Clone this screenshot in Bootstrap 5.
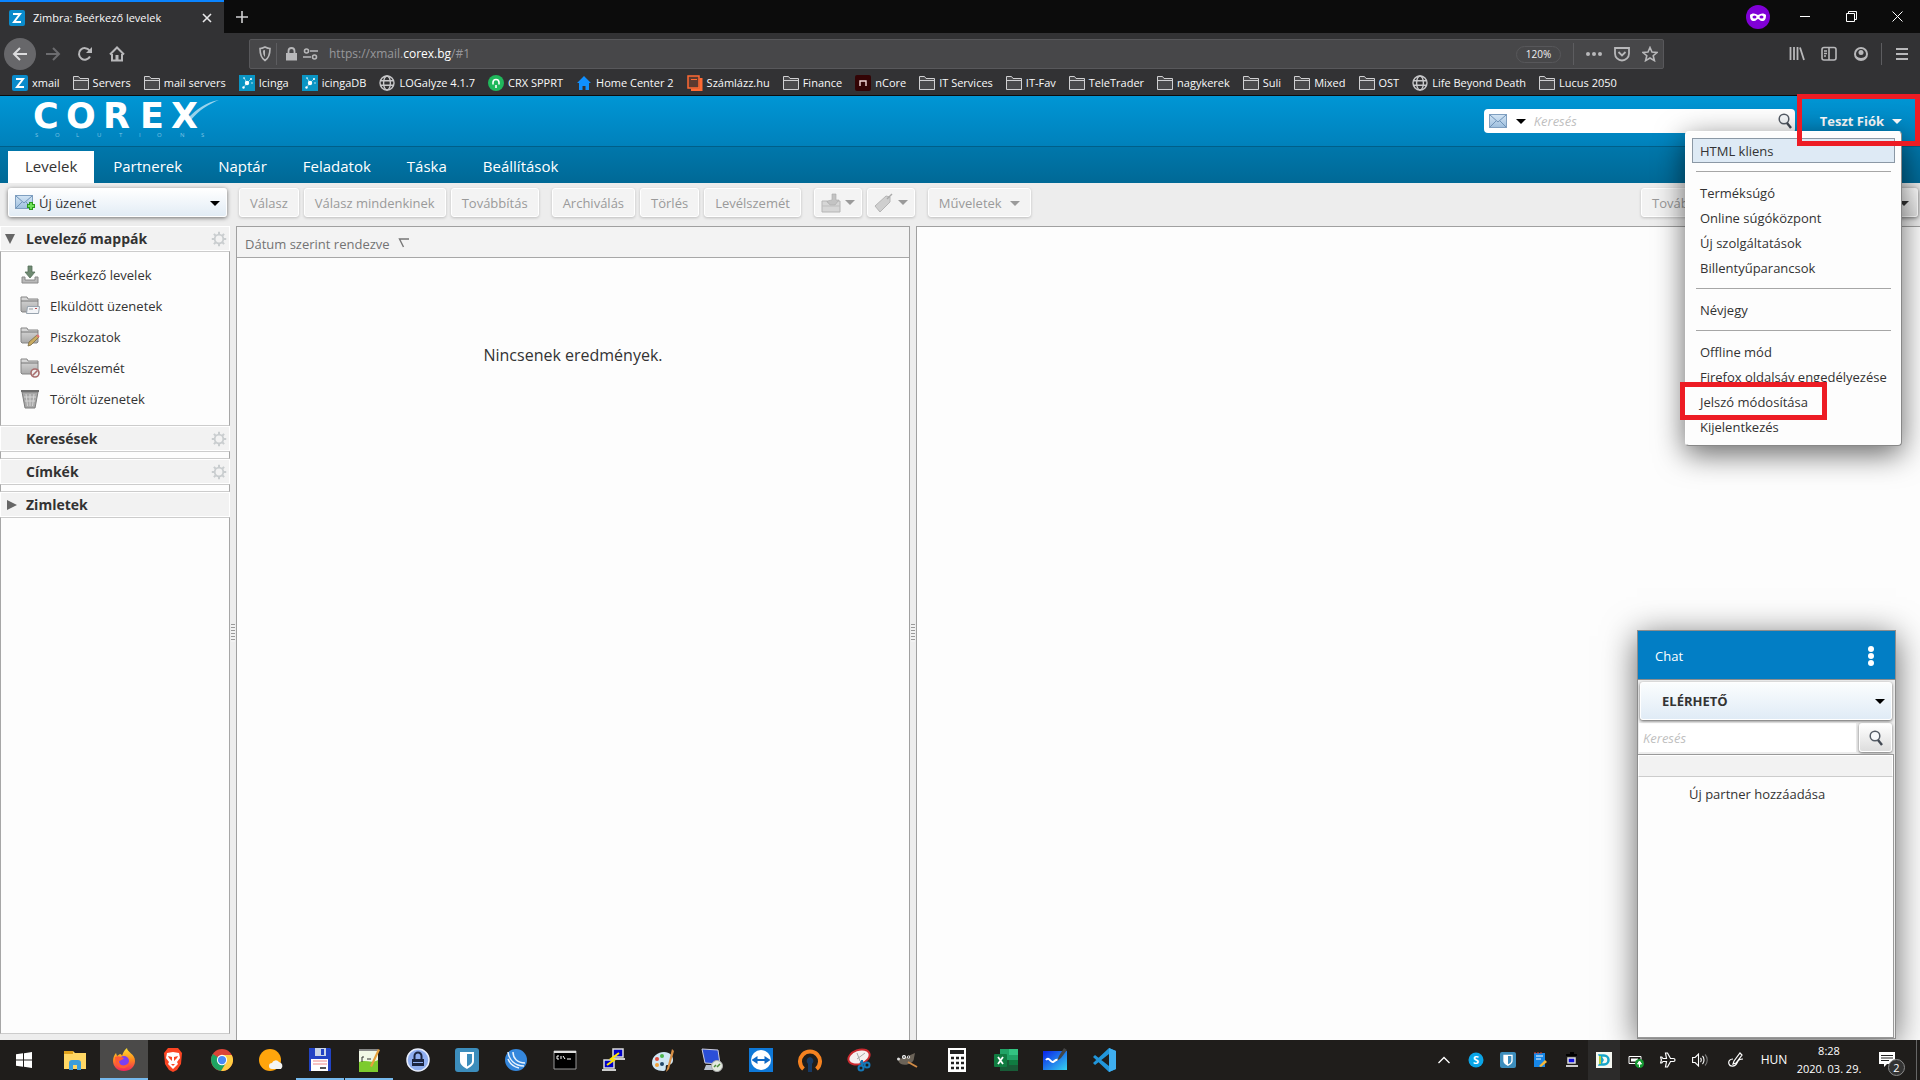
<!doctype html>
<html lang="hu">
<head>
<meta charset="utf-8">
<meta name="viewport" content="width=device-width, initial-scale=1">
<title>Zimbra: Beérkező levelek</title>
<link rel="stylesheet" href="https://cdn.jsdelivr.net/npm/bootstrap@5.3.0/dist/css/bootstrap.min.css">
<style>
body{font-family:"Open Sans","Noto Sans",sans-serif;font-size:13px;line-height:20px;color:#333;background:#ededed}
button{font:inherit;color:inherit;background:none;border:0;padding:0}
svg{display:block;flex:none}
a{color:inherit;text-decoration:none}
.ui-caret{width:0;height:0;border:5px solid transparent;border-top-color:currentColor;border-bottom:0}

/* browser window */
.ff{color:#f9f9fa;font-size:11px;background:#323234}
.ff-tabs{height:33px;background:#0c0c0c}
.ff-tab{width:224px;background:#323234;border-top:2px solid #0a84ff;padding:0 11px 0 9px}
.ff-mask{margin-right:12px}
.ff-win{width:46px;height:26px}
.ff-nav{height:40px;padding:2px 2px 0 4px;color:#b8b8ba}
.ff-tool{width:32px;height:32px}
.ff-back{background:#67676a;color:#dcdcde;margin-right:1px}
.ff-url{height:30px;margin:0 117px 0 116px;padding:0 5px 0 8px;background:#474749;border:1px solid #58585b;border-radius:2px}
.ff-sep{width:1px;height:22px;background:#5d5d60}
.ff-addr{font-size:12px;color:#97979b;outline:0}
.ff-zoom{width:45px;height:17px;line-height:15px;border:1px solid #57575a;border-radius:9px;color:#f0f0f2;font-size:10px}
.ff-marks{height:23px;padding:0 12px 2px;gap:13px;border-bottom:1px solid #0c0c0d}

/* mail header */
.zm-top{height:50px;background:linear-gradient(#0096d5,#0081bb);padding:0 18px 0 0}
.zm-search{width:311px;height:24px;background:#fff;border-radius:4px;padding:0 2px 0 5px;margin-right:25px}
.zm-search input,.ch-find input{border:0;outline:0;background:transparent;font-style:italic;min-width:0}
.zm-search input::placeholder,.ch-find input::placeholder{color:#bfbfbf;opacity:1}
.zm-kind{padding:0 8px 0 9px}
.zm-apps{height:37px;background:linear-gradient(#0077ab,#006996);border-top:1px solid #005f89;gap:2px;padding:4px 8px 0}
.zm-app{color:#fff;font-size:15px;line-height:30px;padding:0 17px 2px}
.zm-app.active{background:#fff;color:#333}
.zm-bar{height:43px;padding:5px 2px 0 8px;gap:5px}
.zm-btn{height:29px;padding:1px 10px 0;border:1px solid #fff;border-radius:3px;background:#f3f3f3;color:#9a9a9a;box-shadow:0 1px 3px #0003;white-space:nowrap}
.zm-pic{padding:0 6px;gap:4px}
.zm-new{width:219px;padding:1px 6px 0;margin-right:7px;color:#333;background:linear-gradient(#fff,#e2ecf5);box-shadow:0 1px 4px #0008}
.zm-more{width:140px;margin-right:72px}
.zm-view{width:60px;color:#333;background:linear-gradient(#fff,#e2e2e2);box-shadow:0 1px 4px #0008}

/* panes */
.zm-side{width:230px;margin-bottom:6px}
.zm-head{height:25px;background:#f2f2f2;border:1px solid #fff;font-weight:700;font-size:14px;padding:0 2px 0 25px;color:#333}
.zm-head .zm-tw{width:20px;margin-left:-21px;margin-right:1px;color:#666}
.zm-body{border:1px solid #a7a7a7;border-top-color:#ccc;border-bottom-color:#ccc;background:#fdfdfd}
.zm-slot{height:8px}
.zm-list{padding:7px 0 11px 19px}
.zm-list a{height:31px;gap:10px}
.zm-split{width:6px;background:#ededed}
.zm-grip{width:4px;height:18px;background:repeating-linear-gradient(#999 0 1px,#f2f2f2 1px 3px)}
.zm-pane{background:#fdfdfd;border:1px solid #a0a0a0;border-bottom:0}
.zm-mid{flex:67 1 0}
.zm-read{flex:100 1 0;border-right:0}
.zm-sort{height:31px;background:#f3f3f3;border-bottom:1px solid #a7a7a7;color:#737373;padding:4px 8px 0;gap:8px}
.zm-none{font-size:16px;margin-top:87px}

/* account menu and its frames */
.zm-account{position:absolute;right:18px;top:131px;width:217px;padding:6px;background:#fdfdfd;border:1px solid #fff;border-right-color:#888;border-bottom-color:#888;border-radius:4px;box-shadow:0 8px 30px #0009;z-index:5}
.zm-account a{height:25px;line-height:24px;padding:0 7px;border:1px solid transparent;white-space:nowrap}
.zm-account a.active{background:#deeaf5;border-color:#8b98a5}
.zm-account hr{margin:8px 4px;border:0;border-top:1px solid #a6a6a6;opacity:1}
.frame-user,.frame-pass{position:absolute;border:5px solid #ed1c24;z-index:6;pointer-events:none}
.frame-user{right:0;top:94px;width:123px;height:52px}
.frame-pass{right:93px;top:382px;width:147px;height:38px}

/* chat */
.ch{position:absolute;right:24px;bottom:41px;width:259px;height:409px;background:#ededed;border:1px solid #8d8d8d;box-shadow:0 6px 32px #0009;z-index:4}
.ch-title{height:49px;background:#027ec5;color:#fff;padding:2px 20px 0 17px;border-bottom:1px solid #8d8d8d}
.ch-state{position:relative;margin:2px 2px 3px}
.ch-state select{appearance:none;width:252px;height:38px;border:1px solid #fff;border-radius:3px;padding:0 21px;background:linear-gradient(#fbfdfe,#e0ebf6);font-weight:700;color:#333;box-shadow:0 1px 3px #0009}
.ch-state .ui-caret{position:absolute;right:8px;top:17px;color:#000}
.ch-find{height:31px;gap:3px;padding:0 3px 2px 1px}
.ch-find input{background:#fff;padding:0 4px}
.ch-find button{width:33px;border:1px solid #fff;border-radius:3px;background:linear-gradient(#fff,#ddd);box-shadow:0 1px 3px #0008}
.ch-list{border:1px solid #999;border-left:0;background:#fdfdfd;margin-right:1px}
.ch-group{height:22px;background:#f2f2f2;border:1px solid #fff;border-bottom-color:#ccc}
.ch-add{padding:7px 51px}

/* taskbar */
.tb{height:40px;background:#1f1d1b;color:#fff;z-index:7}
.tb-apps{gap:1px}
.tb-app{width:48px;border-bottom:2px solid transparent;padding-top:2px}
.tb-start{margin-right:2px}
.tb-run{border-color:#76b9ed}
.tb-now{background:#4b4a49}
.tb-icon{width:32px}
.tb-on{background:#2c2b2a}
.tb-clock{width:66px;font-size:11px;line-height:18px}
.tb-lang{font-size:12px;width:44px}
.tb-note{width:54px;padding-left:17px;position:relative}
.tb-count{position:absolute;left:26px;top:19px;width:17px;height:17px;line-height:15px;border:1px solid #8b8b8b;border-radius:50%;background:#333;font-size:11px}
.tb-edge{width:4px;border-left:1px solid #666}
</style>
</head>
<body class="vh-100 overflow-hidden d-flex flex-column position-relative">

<svg width="0" height="0" class="position-absolute" aria-hidden="true">
<defs>
<linearGradient id="gEnv" x1="0" y1="0" x2="0" y2="1"><stop offset="0" stop-color="#d3e5f5"/><stop offset="1" stop-color="#9dbedd"/></linearGradient>
<linearGradient id="gFold" x1="0" y1="0" x2="0" y2="1"><stop offset="0" stop-color="#ddd"/><stop offset="1" stop-color="#a9a9a9"/></linearGradient>
<linearGradient id="gFire" x1="0" y1="0" x2="0" y2="1"><stop offset="0" stop-color="#ffe234"/><stop offset=".5" stop-color="#ff8a1c"/><stop offset="1" stop-color="#f0245e"/></linearGradient>
<linearGradient id="gScreen" x1="0" y1="0" x2="1" y2="1"><stop offset="0" stop-color="#0a22e8"/><stop offset="1" stop-color="#35d2f0"/></linearGradient>
<symbol id="zim" viewBox="0 0 16 16"><rect width="16" height="16" rx="2" fill="#0a8bcb"/><path d="M4 4h7L5 12h7" fill="none" stroke="#fff" stroke-width="2"/></symbol>
<symbol id="dir" viewBox="0 0 16 16"><path d="M.5 14.500v-13h5l1.500 2h8.500v11z" fill="#4a4a4c" stroke="#d0d0d2"/><path d="M.5 5.500h15" stroke="#d0d0d2"/></symbol>
<symbol id="ici" viewBox="0 0 16 16"><rect width="16" height="16" fill="#0a95c4"/><circle cx="8" cy="8" r="2.200" fill="#fff"/><circle cx="12" cy="4" r="1" fill="#fff"/><circle cx="5" cy="3" r=".8" fill="#fff"/><circle cx="4.500" cy="12.500" r="1.200" fill="#fff"/><circle cx="13" cy="8" r=".7" fill="#fff"/><path d="M8 8 12 4M8 8 5 3M8 8l-3.500 4.500" stroke="#fff" stroke-width=".5"/></symbol>
<symbol id="globe" viewBox="0 0 16 16"><g fill="none" stroke="#c8c8ca" stroke-width="1.400"><circle cx="8" cy="8" r="7"/><ellipse cx="8" cy="8" rx="3.400" ry="7"/><path d="M1 5.700h14M1 10.300h14"/></g></symbol>
<symbol id="env" viewBox="0 0 18 14"><rect x=".5" y=".5" width="17" height="13" fill="url(#gEnv)" stroke="#7f9fc0"/><path d="M1 1l8 7 8-7M1 13l6-6M17 13l-6-6" fill="none" stroke="#6f93b8"/></symbol>
<symbol id="mag" viewBox="0 0 16 16"><circle cx="7" cy="6" r="4.800" fill="#f7f9fb" stroke="#555c66" stroke-width="1.500"/><path d="M10 10l4 5" stroke="#444b55" stroke-width="2.400"/></symbol>
<symbol id="gear" viewBox="0 0 16 16"><circle cx="8" cy="8" r="4.300" fill="none" stroke="#c9cdcf" stroke-width="1.800"/><g stroke="#c9cdcf" stroke-width="2"><path d="M8 .8v2.500M8 12.700v2.500M.8 8h2.500M12.700 8h2.500M2.900 2.900l1.800 1.800M11.300 11.300l1.800 1.800M13.100 2.900l-1.800 1.800M4.700 11.300l-1.800 1.800"/></g></symbol>
<symbol id="fold" viewBox="0 0 20 18"><path d="M1 15V1h6l1 2h10v12l-1 1H2z" fill="url(#gFold)" stroke="#858585"/><path d="M1 5h17" stroke="#777"/></symbol>
<symbol id="bitw" viewBox="0 0 24 24"><rect width="24" height="24" rx="3" fill="#3c8dbc"/><path d="M5 4h14v9c0 4-4 6-7 8-3-2-7-4-7-8z" fill="#fff"/><path d="M12 6h5v7c0 3-3 4-5 5.500z" fill="#3c8dbc"/></symbol>
</defs>
</svg>

<header class="ff flex-shrink-0">
  <div class="ff-tabs d-flex">
    <div class="ff-tab d-flex align-items-center gap-1">
      <svg width="16" height="16"><use href="#zim"/></svg>
      <span class="ms-1 flex-grow-1">Zimbra: Beérkező levelek</span>
      <button type="button" aria-label="Lap bezárása"><svg width="12" height="12"><path d="M2 2l8 8M10 2l-8 8" stroke="#e8e8ea" stroke-width="1.600"/></svg></button>
    </div>
    <button type="button" class="px-2 ms-1" aria-label="Új lap"><svg width="12" height="12"><path d="M6 0v12M0 6h12" stroke="#d0d0d2" stroke-width="1.600"/></svg></button>
    <div class="ms-auto d-flex align-items-center">
      <svg class="ff-mask" width="24" height="24"><circle cx="12" cy="12" r="12" fill="#8000d7"/><path d="M4 10c2-2 5-2 8 0 3-2 6-2 8 0 0 4-1 6-4 6-2 0-3-2-4-2s-2 2-4 2c-3 0-4-2-4-6z" fill="#fff"/><ellipse cx="8.500" cy="12" rx="2" ry="1.500" fill="#8000d7"/><ellipse cx="15.500" cy="12" rx="2" ry="1.500" fill="#8000d7"/></svg>
      <button type="button" class="ff-win d-flex align-items-center justify-content-center" aria-label="Kis méret"><svg width="10" height="10"><path d="M0 4.500h10" stroke="#fff"/></svg></button>
      <button type="button" class="ff-win d-flex align-items-center justify-content-center" aria-label="Előző méret"><svg width="11" height="11"><path d="M.5 2.500h8v8h-8zM2.500 2.500v-2h8v8h-2" fill="none" stroke="#fff"/></svg></button>
      <button type="button" class="ff-win d-flex align-items-center justify-content-center" aria-label="Bezárás"><svg width="11" height="11"><path d="M.5.5l10 10M10.500.5l-10 10" stroke="#fff"/></svg></button>
    </div>
  </div>
  <div class="ff-nav d-flex align-items-center">
    <button type="button" class="ff-tool ff-back rounded-circle d-flex align-items-center justify-content-center" aria-label="Vissza"><svg width="16" height="16"><path d="M15 8H2M8 2L2 8l6 6" fill="none" stroke="currentColor" stroke-width="2"/></svg></button>
    <button type="button" class="ff-tool d-flex align-items-center justify-content-center" aria-label="Előre"><svg width="16" height="16"><path d="M1 8h13M8 2l6 6-6 6" fill="none" stroke="#6c6c6f" stroke-width="2"/></svg></button>
    <button type="button" class="ff-tool d-flex align-items-center justify-content-center" aria-label="Frissítés"><svg width="16" height="16"><path d="M13 10.500A5.800 5.800 0 1 1 12.500 4.500" fill="none" stroke="currentColor" stroke-width="2"/><path d="M15 1v6H9z" fill="currentColor"/></svg></button>
    <button type="button" class="ff-tool d-flex align-items-center justify-content-center" aria-label="Kezdőlap"><svg width="16" height="16"><path d="M1 8.500L8 1.500l7 7M3 8v6.500h10V8" fill="none" stroke="currentColor" stroke-width="2"/><path d="M6.500 14V9h3v5" fill="currentColor"/></svg></button>
    <div class="ff-url flex-grow-1 d-flex align-items-center">
      <svg width="14" height="16"><path d="M2 2.500c2 0 3-.5 5-1.500 2 1 3 1.500 5 1.500 0 6-1 9.500-5 12-4-2.500-5-6-5-12z" fill="none" stroke="currentColor" stroke-width="1.600"/><path d="M7 4v7c-1.500-1.500-2-3-2-6.500z" fill="currentColor"/></svg>
      <span class="ff-sep ms-1 me-2"></span>
      <svg width="14" height="14"><path d="M1 6h11v7.500H1z" fill="currentColor"/><path d="M3.500 6V4a3 3 0 0 1 6 0v2" fill="none" stroke="currentColor" stroke-width="1.800"/></svg>
      <svg class="ms-1 me-2" width="18" height="14"><g fill="none" stroke="currentColor" stroke-width="1.600"><circle cx="3.500" cy="4" r="2"/><path d="M7 4h8M0 10h8"/><circle cx="11.500" cy="10" r="2"/></g></svg>
      <span class="ff-addr flex-grow-1" role="textbox" contenteditable="true" aria-label="Webcím" spellcheck="false">https://xmail.<span class="text-white">corex.bg</span>/#1</span>
      <button type="button" class="ff-zoom me-2">120%</button>
      <span class="ff-sep ms-1 me-2"></span>
      <button type="button" class="mx-1" aria-label="Műveletek"><svg width="16" height="16" fill="currentColor"><circle cx="2" cy="8" r="2"/><circle cx="8" cy="8" r="2"/><circle cx="14" cy="8" r="2"/></svg></button>
      <button type="button" class="mx-2" aria-label="Pocket"><svg width="16" height="16" fill="none" stroke="currentColor" stroke-width="1.800"><path d="M1 2h14v5.500a7 7 0 0 1-14 0z"/><path d="M4.500 6L8 9.500 11.500 6"/></svg></button>
      <button type="button" class="ms-1" aria-label="Könyvjelző"><svg width="16" height="16"><path d="M8 1.500l2 4.600 5 .4-3.800 3.200 1.200 4.900L8 12l-4.400 2.600 1.200-4.900L1 6.500l5-.4z" fill="none" stroke="currentColor" stroke-width="1.600"/></svg></button>
    </div>
    <button type="button" class="ff-tool d-flex align-items-center justify-content-center" aria-label="Könyvtár"><svg width="16" height="16"><path d="M1.500 1v13M5 1v13M8.500 1v13M11 1.500l4 12.500" stroke="currentColor" stroke-width="1.800"/></svg></button>
    <button type="button" class="ff-tool d-flex align-items-center justify-content-center" aria-label="Oldalsáv"><svg width="16" height="16" fill="none" stroke="currentColor" stroke-width="1.600"><rect x="1" y="1.500" width="14" height="12.500" rx="2"/><path d="M8 2v12M3 5h3M3 7.500h3M3 10h2"/></svg></button>
    <button type="button" class="ff-tool d-flex align-items-center justify-content-center" aria-label="Fiók"><svg width="16" height="16"><circle cx="8" cy="8" r="6" fill="none" stroke="currentColor" stroke-width="2"/><circle cx="8" cy="6.500" r="2.500" fill="currentColor"/><path d="M3 10c3 2.500 7 2.500 10 0-1 3-3 4-5 4s-4-1-5-4z" fill="currentColor"/></svg></button>
    <span class="ff-sep ms-1"></span>
    <button type="button" class="ff-tool d-flex align-items-center justify-content-center ms-1" aria-label="Menü"><svg width="14" height="14"><path d="M1 2h12M1 7h12M1 12h12" stroke="currentColor" stroke-width="2"/></svg></button>
  </div>
  <nav class="ff-marks d-flex align-items-center text-nowrap" aria-label="Könyvjelzők">
    <a href="#" class="d-flex align-items-center gap-1"><svg width="16" height="16"><use href="#zim"/></svg>xmail</a>
    <a href="#" class="d-flex align-items-center gap-1"><svg width="16" height="16"><use href="#dir"/></svg>Servers</a>
    <a href="#" class="d-flex align-items-center gap-1"><svg width="16" height="16"><use href="#dir"/></svg>mail servers</a>
    <a href="#" class="d-flex align-items-center gap-1"><svg width="16" height="16"><use href="#ici"/></svg>Icinga</a>
    <a href="#" class="d-flex align-items-center gap-1"><svg width="16" height="16"><use href="#ici"/></svg>icingaDB</a>
    <a href="#" class="d-flex align-items-center gap-1"><svg width="16" height="16"><use href="#globe"/></svg>LOGalyze 4.1.7</a>
    <a href="#" class="d-flex align-items-center gap-1"><svg width="16" height="16"><circle cx="8" cy="8" r="8" fill="#20b85c"/><path d="M5 9.500V7.500a3 3 0 0 1 6 0v2M8 10v3" fill="none" stroke="#fff" stroke-width="1.600"/></svg>CRX SPPRT</a>
    <a href="#" class="d-flex align-items-center gap-1"><svg width="16" height="16"><path d="M8 1l7 7h-2v7H9.500v-4h-3v4H3V8H1z" fill="#1090ff"/></svg>Home Center 2</a>
    <a href="#" class="d-flex align-items-center gap-1"><svg width="16" height="16"><path d="M14 3v12H4" fill="none" stroke="#ff6a33" stroke-width="3"/><rect x="1" y="1" width="11" height="12" fill="#5b3a30" stroke="#ff6a33" stroke-width="1.500"/><path d="M4 4.500h6" stroke="#ff6a33"/></svg>Számlázz.hu</a>
    <a href="#" class="d-flex align-items-center gap-1"><svg width="16" height="16"><use href="#dir"/></svg>Finance</a>
    <a href="#" class="d-flex align-items-center gap-1"><svg width="16" height="16"><rect width="16" height="16" rx="2" fill="#330405"/><path d="M5 11V6h6v5" fill="none" stroke="#f4d6d6" stroke-width="1.400"/></svg>nCore</a>
    <a href="#" class="d-flex align-items-center gap-1"><svg width="16" height="16"><use href="#dir"/></svg>IT Services</a>
    <a href="#" class="d-flex align-items-center gap-1"><svg width="16" height="16"><use href="#dir"/></svg>IT-Fav</a>
    <a href="#" class="d-flex align-items-center gap-1"><svg width="16" height="16"><use href="#dir"/></svg>TeleTrader</a>
    <a href="#" class="d-flex align-items-center gap-1"><svg width="16" height="16"><use href="#dir"/></svg>nagykerek</a>
    <a href="#" class="d-flex align-items-center gap-1"><svg width="16" height="16"><use href="#dir"/></svg>Suli</a>
    <a href="#" class="d-flex align-items-center gap-1"><svg width="16" height="16"><use href="#dir"/></svg>Mixed</a>
    <a href="#" class="d-flex align-items-center gap-1"><svg width="16" height="16"><use href="#dir"/></svg>OST</a>
    <a href="#" class="d-flex align-items-center gap-1"><svg width="16" height="16"><use href="#globe"/></svg>Life Beyond Death</a>
    <a href="#" class="d-flex align-items-center gap-1"><svg width="16" height="16"><use href="#dir"/></svg>Lucus 2050</a>
  </nav>
</header>

<div class="zm-top d-flex align-items-center flex-shrink-0">
  <svg width="230" height="50" role="img" aria-label="Corex Solutions">
    <text x="33 66 103 140 171" y="32" font-family="DejaVu Sans,sans-serif" font-weight="700" font-size="35" fill="#fff">COREX</text>
    <path d="M188 22C196 14 206 6 219 4c-10 4-20 10-28 20z" fill="#fff" fill-opacity=".6"/>
    <text x="35 55 76 97 119 139 157 180 201" y="41" font-size="6" fill="#7fc4e4">SOLUTIONS</text>
  </svg>
  <form class="zm-search d-flex align-items-center ms-auto" role="search">
    <svg width="18" height="14"><use href="#env"/></svg>
    <button type="button" class="zm-kind text-black" aria-label="Keresés típusa"><span class="ui-caret d-block"></span></button>
    <input type="search" class="flex-grow-1 p-0" placeholder="Keresés" aria-label="Keresés">
    <button type="submit" aria-label="Keresés indítása"><svg width="16" height="16"><use href="#mag"/></svg></button>
  </form>
  <button type="button" class="text-white fw-bold d-flex align-items-center gap-2">Teszt Fiók <span class="ui-caret"></span></button>
</div>

<nav class="zm-apps d-flex flex-shrink-0">
  <a href="#" class="zm-app active">Levelek</a>
  <a href="#" class="zm-app">Partnerek</a>
  <a href="#" class="zm-app">Naptár</a>
  <a href="#" class="zm-app">Feladatok</a>
  <a href="#" class="zm-app">Táska</a>
  <a href="#" class="zm-app">Beállítások</a>
</nav>

<div class="zm-bar d-flex flex-shrink-0">
  <button type="button" class="zm-btn zm-new d-flex align-items-center">
    <svg width="20" height="18"><use href="#env" width="18" height="14" y="1"/><path d="M16 8v8M12 12h8" stroke="#2a9a1c" stroke-width="4"/><path d="M16 9v6M13 12h6" stroke="#6fe05a" stroke-width="2"/></svg>
    <span class="ms-1 flex-grow-1 text-start">Új üzenet</span><span class="ui-caret text-black"></span>
  </button>
  <button type="button" class="zm-btn">Válasz</button>
  <button type="button" class="zm-btn">Válasz mindenkinek</button>
  <button type="button" class="zm-btn">Továbbítás</button>
  <button type="button" class="zm-btn ms-2">Archiválás</button>
  <button type="button" class="zm-btn">Törlés</button>
  <button type="button" class="zm-btn">Levélszemét</button>
  <button type="button" class="zm-btn zm-pic ms-2 d-flex align-items-center" aria-label="Áthelyezés"><svg width="20" height="20"><path d="M1 8h5l1 2h8l1-2h3v11H1z" fill="#d6d6d6" stroke="#b5b5b5"/><path d="M11 1h4v6h3l-4 5H9l-3-4 5-1z" fill="#c3c3c3" stroke="#aaa" stroke-width=".6"/><path d="M1 13h18" stroke="#bdbdbd"/></svg><span class="ui-caret"></span></button>
  <button type="button" class="zm-btn zm-pic d-flex align-items-center" aria-label="Címke"><svg width="20" height="20"><path d="M1 13L12 3l4 1v5L6 19z" fill="#cfcfcf" stroke="#b5b5b5"/><path d="M13 6l5-5" stroke="#aaa" stroke-width="1.500"/></svg><span class="ui-caret"></span></button>
  <button type="button" class="zm-btn ms-2 d-flex align-items-center gap-2">Műveletek <span class="ui-caret"></span></button>
  <button type="button" class="zm-btn zm-more ms-auto text-start">Tovább</button>
  <button type="button" class="zm-btn zm-view d-flex align-items-center justify-content-end px-2" aria-label="Nézet"><span class="ui-caret"></span></button>
</div>

<main class="d-flex flex-grow-1 overflow-hidden">
  <aside class="zm-side d-flex flex-column flex-shrink-0">
    <div class="zm-head d-flex align-items-center"><svg class="zm-tw" width="20" height="12" viewBox="0 0 20 12"><path d="M0 1h10L5 11z" fill="#666"/></svg><span class="flex-grow-1">Levelező mappák</span><button type="button" aria-label="Mappák beállításai"><svg width="16" height="16"><use href="#gear"/></svg></button></div>
    <div class="zm-body zm-list d-flex flex-column">
      <a href="#" class="d-flex align-items-center"><svg width="20" height="20"><path d="M2 12v6h16v-6h-3v3H5v-3z" fill="#b9b9b9" stroke="#8a8a8a"/><path d="M8 1h4v6h3l-5 6-5-6h3z" fill="#6f8a72" stroke="#55705a" stroke-width=".8"/></svg>Beérkező levelek</a>
      <a href="#" class="d-flex align-items-center"><svg width="20" height="20"><use href="#fold" width="20" height="18"/><path d="M7.500 10.500h12l-1 7h-12z" fill="#f2f4f7" stroke="#98a3ae"/><path d="M9 13h4" stroke="#999"/><path d="M15 12.500h2" stroke="#b55"/></svg>Elküldött üzenetek</a>
      <a href="#" class="d-flex align-items-center"><svg width="20" height="20"><use href="#fold" width="20" height="18"/><path d="M8 19l1-4 8-7 2 2-8 8z" fill="#c9ab62" stroke="#7a6a44" stroke-width=".8"/><path d="M17 8l2 2" stroke="#d77" stroke-width="2"/></svg>Piszkozatok</a>
      <a href="#" class="d-flex align-items-center"><svg width="20" height="20"><use href="#fold" width="20" height="18"/><circle cx="15" cy="15" r="4" fill="#eee" stroke="#a86c6c" stroke-width="1.600"/><path d="M12.500 17.500l5-5" stroke="#a86c6c" stroke-width="1.600"/></svg>Levélszemét</a>
      <a href="#" class="d-flex align-items-center"><svg width="20" height="20"><path d="M2 3h16l-3 16H5z" fill="#a8a8a8" stroke="#7d7d7d"/><path d="M1 2h18" stroke="#6f6f6f" stroke-width="2"/><path d="M6 5l1.500 12M10 5v12M14 5l-1.500 12M4 8h12M5 12h10" stroke="#d5d5d5"/></svg>Törölt üzenetek</a>
    </div>
    <div class="zm-head d-flex align-items-center"><span class="flex-grow-1">Keresések</span><button type="button" aria-label="Keresések beállításai"><svg width="16" height="16"><use href="#gear"/></svg></button></div>
    <div class="zm-body zm-slot"></div>
    <div class="zm-head d-flex align-items-center"><span class="flex-grow-1">Címkék</span><button type="button" aria-label="Címkék beállításai"><svg width="16" height="16"><use href="#gear"/></svg></button></div>
    <div class="zm-body zm-slot"></div>
    <div class="zm-head d-flex align-items-center"><svg class="zm-tw" width="20" height="12" viewBox="0 0 20 12"><path d="M2 1v10l10-5z" fill="#666"/></svg><span>Zimletek</span></div>
    <div class="zm-body flex-grow-1"></div>
  </aside>
  <div class="zm-split d-flex align-items-center justify-content-center"><div class="zm-grip"></div></div>
  <section class="zm-pane zm-mid">
    <div class="zm-sort d-flex align-items-center">Dátum szerint rendezve <svg width="12" height="12"><path d="M11 1H1.500l4 8" fill="none" stroke="#777" stroke-width="1.400"/></svg></div>
    <p class="zm-none text-center mb-0">Nincsenek eredmények.</p>
  </section>
  <div class="zm-split d-flex align-items-center justify-content-center"><div class="zm-grip"></div></div>
  <section class="zm-pane zm-read"></section>
</main>

<div class="zm-account d-flex flex-column">
  <a href="#" class="active">HTML kliens</a>
  <hr>
  <a href="#">Terméksúgó</a>
  <a href="#">Online súgóközpont</a>
  <a href="#">Új szolgáltatások</a>
  <a href="#">Billentyűparancsok</a>
  <hr>
  <a href="#">Névjegy</a>
  <hr>
  <a href="#">Offline mód</a>
  <a href="#">Firefox oldalsáv engedélyezése</a>
  <a href="#">Jelszó módosítása</a>
  <a href="#">Kijelentkezés</a>
</div>
<div class="frame-user"></div>
<div class="frame-pass"></div>

<section class="ch d-flex flex-column" aria-label="Chat">
  <div class="ch-title d-flex align-items-center justify-content-between flex-shrink-0">Chat
    <button type="button" aria-label="Chat menü"><svg width="8" height="22" fill="#fff"><circle cx="4" cy="4" r="3"/><circle cx="4" cy="11" r="3"/><circle cx="4" cy="18" r="3"/></svg></button>
  </div>
  <div class="ch-state"><select aria-label="Állapot"><option>ELÉRHETŐ</option></select><span class="ui-caret"></span></div>
  <form class="ch-find d-flex flex-shrink-0">
    <input type="search" class="flex-grow-1" placeholder="Keresés" aria-label="Partner keresése">
    <button type="button" class="d-flex align-items-center justify-content-center" aria-label="Keresés"><svg width="16" height="16"><use href="#mag"/></svg></button>
  </form>
  <div class="ch-list flex-grow-1">
    <div class="ch-group"></div>
    <div class="ch-add"><a href="#">Új partner hozzáadása</a></div>
  </div>
</section>

<footer class="tb d-flex flex-shrink-0">
  <div class="tb-apps d-flex">
    <button type="button" class="tb-app tb-start d-flex align-items-center justify-content-center" aria-label="Start"><svg width="16" height="16" fill="#fff"><path d="M0 2.300l7-1v6.300H0zM8 1.200L16 0v7.600H8zM0 8.400h7v6.300l-7-1zM8 8.400h8V16l-8-1.200z"/></svg></button>
    <button type="button" class="tb-app d-flex align-items-center justify-content-center" aria-label="Fájlkezelő"><svg width="24" height="24"><path d="M1 3h9l2 2h11v16H1z" fill="#ffd764"/><path d="M1 3h9v3H1z" fill="#e0a21c"/><path d="M6 22v-7a3 3 0 0 1 3-3h6a3 3 0 0 1 3 3v7h-4v-5h-4v5z" fill="#3b9ddb"/></svg></button>
    <button type="button" class="tb-app tb-run tb-now d-flex align-items-center justify-content-center" aria-label="Firefox"><svg width="24" height="24"><path d="M12 23C5 23 1 18 1 13c0-3 1-6 3-8l1 3 3-2c1 0 2 1 2 2 1-3 2-6 5-8 0 4 8 6 8 13 0 6-5 10-11 10z" fill="url(#gFire)"/><circle cx="12" cy="13" r="5" fill="#7b3ff2"/><path d="M3 9c3-2 6 0 9 1-2 3-5 2-6 4 2 5 9 4 11 0 0 5-4 7-7 6-4 0-7-4-7-11z" fill="#ff5a36"/></svg></button>
    <button type="button" class="tb-app d-flex align-items-center justify-content-center" aria-label="Brave"><svg width="24" height="24"><path d="M7 0h10l4 5-1 11-4 6-4 2-4-2-4-6L3 5z" fill="#fb4523"/><path d="M6 5l6-1 6 1 1 5-3 4 1 2-5 5-5-5 1-2-3-4z" fill="#fff"/><path d="M7 8l4 1v4l-3-3zM17 8l-4 1v4l3-3zM10 16h4l-2 2z" fill="#fb4523"/></svg></button>
    <button type="button" class="tb-app d-flex align-items-center justify-content-center" aria-label="Chrome"><svg width="22" height="22" viewBox="0 0 24 24"><circle cx="12" cy="12" r="12" fill="#db4437"/><path d="M12 12L2 5.500A12 12 0 0 0 11 24l6-9z" fill="#1da462"/><path d="M12 6.500h10.600A12 12 0 0 1 11 24l6-10z" fill="#ffcd42"/><circle cx="12" cy="12" r="5.600" fill="#fff"/><circle cx="12" cy="12" r="4.500" fill="#4a8af4"/></svg></button>
    <button type="button" class="tb-app d-flex align-items-center justify-content-center" aria-label="Időjárás"><svg width="24" height="24"><circle cx="11" cy="12" r="11" fill="#ffa50c"/><path d="M13 21a3 3 0 0 1 0-6 4 4 0 0 1 7-1 4 4 0 0 1 2 7z" fill="#f4f4f4"/></svg></button>
    <button type="button" class="tb-app tb-run d-flex align-items-center justify-content-center" aria-label="Total Commander"><svg width="24" height="24"><path d="M1 0h21l1 1v22H1z" fill="#2243c4"/><path d="M7 0h11v8H7z" fill="#c8d4e8"/><path d="M13 1h3v6h-3z" fill="#2243c4"/><path d="M3 11h17v12H3z" fill="#fff"/><path d="M5 13h14M5 16h14" stroke="#e88"/><path d="M12 20h6" stroke="#555" stroke-width="2"/></svg></button>
    <button type="button" class="tb-app tb-run d-flex align-items-center justify-content-center" aria-label="Notepad++"><svg width="24" height="24"><path d="M2 1h19v23H2z" fill="#f1f7e6"/><path d="M2 14c6-3 13 2 19-2v12H2z" fill="#7ccb2e"/><path d="M2 2h19" stroke="#888" stroke-width="2"/><path d="M5 14V9h2M10 11h4" stroke="#333" fill="none"/><path d="M13 18L21 1l2 1-8 17z" fill="#e8a13c"/></svg></button>
    <button type="button" class="tb-app d-flex align-items-center justify-content-center" aria-label="KeePass"><svg width="24" height="24"><circle cx="12" cy="12" r="11" fill="#8faef0" stroke="#e8eefc" stroke-width="1.500"/><path d="M6 11h12v7H6z" fill="#1a2440"/><path d="M8.500 11V8a3.500 3.500 0 0 1 7 0v3" fill="none" stroke="#1a2440" stroke-width="2"/><path d="M7 14.500h10" stroke="#8faef0"/></svg></button>
    <button type="button" class="tb-app d-flex align-items-center justify-content-center" aria-label="Bitwarden"><svg width="24" height="24"><use href="#bitw"/></svg></button>
    <button type="button" class="tb-app d-flex align-items-center justify-content-center" aria-label="Szinkronizálás"><svg width="22" height="22"><circle cx="11" cy="11" r="11" fill="#3587dc"/><path d="M3 3c1 8 7 14 16 14M8 3c0 6 4 11 12 11M3 10c2 5 6 8 11 9" fill="none" stroke="#e8f2fc" stroke-width="1.500"/></svg></button>
    <button type="button" class="tb-app d-flex align-items-center justify-content-center" aria-label="Parancssor"><svg width="24" height="24"><path d="M1 3h22v18H1z" fill="#000" stroke="#999"/><path d="M1 4h22" stroke="#ddd" stroke-width="2"/><path d="M6 8H4v3h2M8 8v3M10 8l2 3M14 11h4" stroke="#fff" fill="none"/></svg></button>
    <button type="button" class="tb-app d-flex align-items-center justify-content-center" aria-label="PuTTY"><svg width="24" height="24"><path d="M11 1h10v8H11z" fill="#0000c8" stroke="#ddd" stroke-width="1.500"/><path d="M10 10h13v2H10zM0 21h14v2H0z" fill="#ccc"/><path d="M2 12h10v8H2z" fill="#0000c8" stroke="#ddd" stroke-width="1.500"/><path d="M17 5l-8 6 3 1-7 5" fill="none" stroke="#ffe600" stroke-width="2"/></svg></button>
    <button type="button" class="tb-app d-flex align-items-center justify-content-center" aria-label="Paint"><svg width="24" height="24"><path d="M1 15C1 8 7 4 13 4s9 4 9 8-3 5-6 5 1 6-4 6C6 23 1 20 1 15z" fill="#cfe6f5"/><circle cx="6" cy="11" r="2" fill="#e14b3c"/><circle cx="11" cy="8" r="2" fill="#4bb54b"/><circle cx="6" cy="17" r="2" fill="#f0a23a"/><circle cx="11" cy="16" r="2" fill="#23486b"/><path d="M21 1l2 2-5 18-3 3 2-7z" fill="#d99046"/></svg></button>
    <button type="button" class="tb-app d-flex align-items-center justify-content-center" aria-label="Távoli asztal"><svg width="24" height="24"><path d="M2 1l16 1 2 14-15-1z" fill="#2b4fd8" stroke="#ccd"/><path d="M6 17h10l2 5H4z" fill="#b9c2cf"/><circle cx="17" cy="18" r="5.500" fill="#e4eadf" stroke="#aaa"/><path d="M14 19l2-2M17 19l3-3" stroke="#4a8a3a" stroke-width="1.500"/></svg></button>
    <button type="button" class="tb-app d-flex align-items-center justify-content-center" aria-label="TeamViewer"><svg width="24" height="24"><path d="M0 0h24v24H0z" fill="#0e78d8"/><circle cx="12" cy="12" r="10" fill="#fff"/><path d="M2.500 12l6-4v3h7V8l6 4-6 4v-3h-7v3z" fill="#0e68c4"/></svg></button>
    <button type="button" class="tb-app d-flex align-items-center justify-content-center" aria-label="OpenVPN"><svg width="24" height="24"><path d="M5.500 21a10 10 0 1 1 13 0" fill="none" stroke="#f58220" stroke-width="4"/><path d="M12 9a4 4 0 0 1 2 7v8h-4v-8a4 4 0 0 1 2-7z" fill="#173a64"/></svg></button>
    <button type="button" class="tb-app d-flex align-items-center justify-content-center" aria-label="Képmetsző"><svg width="24" height="24"><ellipse cx="12" cy="9" rx="11" ry="7" fill="#f6f0f0" stroke="#cc2a30" stroke-width="2" transform="rotate(-20 12 9)"/><path d="M10 5l3 8M18 5l-8 6" stroke="#aaa"/><g fill="none" stroke="#1578b8" stroke-width="2"><circle cx="14" cy="20" r="2.500"/><circle cx="20" cy="17" r="2.500"/><path d="M15 17V12M18 16l-5-2"/></g></svg></button>
    <button type="button" class="tb-app d-flex align-items-center justify-content-center" aria-label="GIMP"><svg width="24" height="24"><path d="M2 10c4 1 7 0 10-2l7-3-1 5c0 6-9 8-13 6-2-1-3-3-3-6z" fill="#6b6358"/><circle cx="8" cy="9" r="2" fill="#fff"/><circle cx="12.500" cy="9" r="1.600" fill="#fff"/><circle cx="8" cy="9" r=".8"/><circle cx="12.500" cy="9" r=".8"/><circle cx="2.500" cy="11" r="1.500" fill="#ddd"/><path d="M12 14l9 5" stroke="#d08a45" stroke-width="2"/></svg></button>
    <button type="button" class="tb-app d-flex align-items-center justify-content-center" aria-label="Számológép"><svg width="24" height="24"><path d="M3 0h18v24H3z" fill="#fff"/><path d="M5 2h14v4H5z" fill="#222"/><path d="M6 10h3M11 10h3M16 10h3M6 15h3M11 15h3M16 15h3M6 20h3M11 20h3M16 20h3" stroke="#222" stroke-width="2.500"/></svg></button>
    <button type="button" class="tb-app d-flex align-items-center justify-content-center" aria-label="Excel"><svg width="24" height="24"><path d="M6 1h9v22H6z" fill="#21a366"/><path d="M15 1h9v11h-9z" fill="#33c481"/><path d="M6 12h18v11H6z" fill="#185c37"/><path d="M15 7h9v5h-9z" fill="#21a366"/><path d="M15 12h9v5h-9z" fill="#107c41"/><rect y="6" width="13" height="13" rx="1" fill="#107c41"/><path d="M4 9l5 7M9 9l-5 7" stroke="#fff" stroke-width="1.800"/></svg></button>
    <button type="button" class="tb-app d-flex align-items-center justify-content-center" aria-label="Whiteboard"><svg width="24" height="24"><path d="M0 3h24v19H0z" fill="url(#gScreen)"/><path d="M3 12c3-4 5 3 7 2s3-3 5-2" fill="none" stroke="#fff" stroke-width="2"/><path d="M14 13l2-5 5-8 3 2-6 8z" fill="#454545"/></svg></button>
    <button type="button" class="tb-app d-flex align-items-center justify-content-center" aria-label="Visual Studio Code"><svg width="24" height="24"><path d="M17 0l7 3v18l-7 3L1 9l2-2 14 11V6L3 17l-2-2z" fill="#2196db"/><path d="M17 0l7 3v18l-7 3z" fill="#3eaef0"/></svg></button>
  </div>
  <div class="ms-auto d-flex align-items-stretch">
    <button type="button" class="tb-icon d-flex align-items-center justify-content-center" aria-label="Rejtett ikonok"><svg width="12" height="8"><path d="M.5 7L6 1.500 11.500 7" fill="none" stroke="#fff" stroke-width="1.300"/></svg></button>
    <span class="tb-icon d-flex align-items-center justify-content-center"><svg width="16" height="16"><circle cx="8" cy="8" r="7.500" fill="#0aa4e6"/><text x="8" y="12" text-anchor="middle" font-size="11" font-weight="700" fill="#fff">S</text></svg></span>
    <span class="tb-icon d-flex align-items-center justify-content-center"><svg width="16" height="16"><use href="#bitw"/></svg></span>
    <span class="tb-icon d-flex align-items-center justify-content-center"><svg width="16" height="16"><path d="M2 1h11v14H2z" fill="#1686e8"/><path d="M4 4h7M4 7h5" stroke="#fff"/><path d="M3 0v2M6 0v2M9 0v2" stroke="#e8432e"/><path d="M7 14l6-6 2 2-6 5z" fill="#f6b93b"/></svg></span>
    <span class="tb-icon d-flex align-items-center justify-content-center"><svg width="16" height="16"><path d="M4 6h7v5H4z" fill="#1010e0" stroke="#ddd" stroke-width="1.500"/><path d="M2 14h12" stroke="#ccc" stroke-width="2"/><path d="M2 3h11M6 1h4" stroke="#000" stroke-width="2"/></svg></span>
    <span class="tb-icon tb-on d-flex align-items-center justify-content-center"><svg width="16" height="16"><path d="M0 0h16v16H0z" fill="#f6f8f2"/><path d="M4 3.500h4a4.500 4.500 0 0 1 0 9H4l2.500-4.500z" fill="none" stroke="#18a5c8" stroke-width="2.500"/><path d="M4 4v8" stroke="#b6cf3c" stroke-width="2"/></svg></span>
    <span class="tb-icon d-flex align-items-center justify-content-center"><svg width="16" height="16"><path d="M1 4.500h12v7H1z" fill="none" stroke="#fff"/><path d="M3 6.500h7v3H3z" fill="#fff"/><circle cx="11.500" cy="11.500" r="4.500" fill="#169a32"/><path d="M11.500 9l2 3h-4zM11.500 11v4" fill="#fff" stroke="#fff"/></svg></span>
    <span class="tb-icon d-flex align-items-center justify-content-center"><svg width="16" height="16"><path d="M6.500 6.500L5.500 1h2l3 5.500h3a1.500 1.500 0 0 1 0 3h-3L7.500 15h-2l1-5.500H3L1.800 11H.6l.8-3-.8-3h1.200L3 6.500z" fill="none" stroke="#fff" stroke-width="1.200"/></svg></span>
    <span class="tb-icon d-flex align-items-center justify-content-center"><svg width="16" height="16" fill="none" stroke="#fff" stroke-width="1.100"><path d="M.6 5.500h2.500L6.500 2v12L3.100 10.500H.6z"/><path d="M8.500 6c1 1 1 3 0 4M10.500 4c2 2 2 6 0 8"/><path d="M13 2.500c3 3 3 8 0 11" stroke="#777"/></svg></span>
    <span class="tb-icon d-flex align-items-center justify-content-center ms-1"><svg width="16" height="16" fill="none" stroke="#fff" stroke-width="1.200"><path d="M6 9l6-8 2 2-6 8-3 1zM5 7C2 7 0 9 1 12s6 3 8-1 3-4 6-4"/></svg></span>
    <button type="button" class="tb-lang">HUN</button>
    <div class="tb-clock text-center text-nowrap d-flex flex-column justify-content-center"><span>8:28</span><span>2020. 03. 29.</span></div>
    <button type="button" class="tb-note" aria-label="Értesítések"><svg width="16" height="16"><path d="M0 0h16v12H8l-3 3v-3H0z" fill="#fff"/><path d="M2 3.500h12M2 6h12M2 8.500h8" stroke="#222"/></svg><span class="tb-count">2</span></button>
    <span class="tb-edge"></span>
  </div>
</footer>

<script src="https://cdn.jsdelivr.net/npm/bootstrap@5.3.0/dist/js/bootstrap.bundle.min.js"></script>
</body>
</html>
